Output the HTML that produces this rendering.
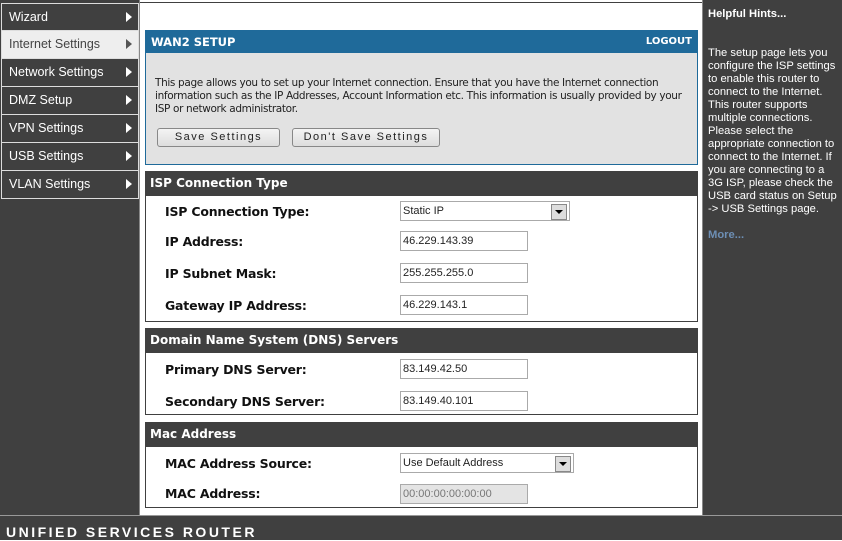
<!DOCTYPE html>
<html><head><style>
*{margin:0;padding:0;box-sizing:border-box}
body{width:842px;height:540px;background:#fff;position:relative;overflow:hidden;font-family:"Liberation Sans",sans-serif}
.a{position:absolute}
.side{left:0;top:0;width:140px;height:515px;background:#404040;border-right:1px solid #888}
.mi{position:absolute;left:1px;width:138px;height:28px;background:#404040;color:#fff;font-size:12.5px;line-height:27px;padding-left:7px;border:1px solid #ddd;border-top:none}
.mi.on{background:#eee;color:#444}
.mi:after{content:"";position:absolute;right:6px;top:8px;border-left:6px solid #fff;border-top:5px solid transparent;border-bottom:5px solid transparent}
.mi.on:after{border-left-color:#555}
.right{left:702px;top:0;width:140px;height:515px;background:#404040;color:#fff;font-family:"Liberation Sans",sans-serif;font-size:11.2px;line-height:13px;padding:8px 3px 0 5px;border-left:1px solid #888}
.hdr{background:#404040;color:#fff;font-weight:bold;font-size:12px;padding-left:5px;font-family:"DejaVu Sans",sans-serif}
.box{border:1px solid #404040;background:#fff}
.lbl{position:absolute;left:19px;font-size:12.5px;font-weight:bold;color:#111;font-family:"DejaVu Sans",sans-serif;letter-spacing:-0.2px}
.in{position:absolute;left:254px;width:128px;height:20px;border:1px solid #aaa;font-size:11px;line-height:18px;padding-left:2px;color:#222;background:#fff}
.sel{width:170px}
.sel:after{content:"";position:absolute;right:2px;top:2px;width:14px;height:14px;background:#ddd;border:1px solid #888}
.sel:before{content:"";position:absolute;right:6px;top:8px;border-top:4px solid #000;border-left:4px solid transparent;border-right:4px solid transparent;z-index:2}
.btn{position:absolute;top:128px;height:19px;border:1px solid #888;border-radius:3px;background:linear-gradient(#f4f4f4,#ddd);font-size:11px;text-align:center;line-height:17px;letter-spacing:1.5px;font-family:"Liberation Sans",sans-serif;color:#222}
</style></head><body>
<div class="a" style="left:0;top:0;width:842px;height:3px;background:#fff;border-bottom:1px solid #404040"></div>
<div class="a side"></div>
<div class="mi" style="top:3px;border-top:1px solid #ddd">Wizard</div>
<div class="mi on" style="top:31px">Internet Settings</div>
<div class="mi" style="top:59px">Network Settings</div>
<div class="mi" style="top:87px">DMZ Setup</div>
<div class="mi" style="top:115px">VPN Settings</div>
<div class="mi" style="top:143px">USB Settings</div>
<div class="mi" style="top:171px">VLAN Settings</div>
<div class="a right"><b>Helpful Hints...</b><br><br><br>The setup page lets you configure the ISP settings to enable this router to connect to the Internet. This router supports multiple connections. Please select the appropriate connection to connect to the Internet. If you are connecting to a 3G ISP, please check the USB card status on Setup -&gt; USB Settings page.<br><br><b style="color:#6d8fb5">More...</b></div>

<div class="a" style="left:145px;top:30px;width:553px;height:135px;border:1px solid #1f6a9a;background:#e2e2e2">
<div style="background:#1f6a9a;color:#fff;height:22px;line-height:22px;font-weight:bold;font-size:11.5px;padding:0 5px;font-family:'DejaVu Sans',sans-serif">WAN2 SETUP<span style="float:right;font-size:10px">LOGOUT</span></div>
<div style="position:absolute;left:9px;top:46px;width:535px;font-size:10.5px;line-height:13px;color:#222;font-family:'DejaVu Sans',sans-serif;letter-spacing:-0.35px">This page allows you to set up your Internet connection. Ensure that you have the Internet connection information such as the IP Addresses, Account Information etc. This information is usually provided by your ISP or network administrator.</div>
</div>
<div class="btn" style="left:157px;width:123px">Save Settings</div>
<div class="btn" style="left:292px;width:148px">Don't Save Settings</div>

<div class="a hdr" style="left:145px;top:171px;width:553px;height:24px;line-height:24px">ISP Connection Type</div>
<div class="a box" style="left:145px;top:195px;width:553px;height:127px">
<div class="lbl" style="top:8px">ISP Connection Type:</div><div class="in sel" style="top:5px">Static IP</div>
<div class="lbl" style="top:38px">IP Address:</div><div class="in" style="top:35px">46.229.143.39</div>
<div class="lbl" style="top:70px">IP Subnet Mask:</div><div class="in" style="top:67px">255.255.255.0</div>
<div class="lbl" style="top:102px">Gateway IP Address:</div><div class="in" style="top:99px">46.229.143.1</div>
</div>
<div class="a hdr" style="left:145px;top:328px;width:553px;height:24px;line-height:24px">Domain Name System (DNS) Servers</div>
<div class="a box" style="left:145px;top:352px;width:553px;height:63px">
<div class="lbl" style="top:9px">Primary DNS Server:</div><div class="in" style="top:6px">83.149.42.50</div>
<div class="lbl" style="top:41px">Secondary DNS Server:</div><div class="in" style="top:38px">83.149.40.101</div>
</div>
<div class="a hdr" style="left:145px;top:422px;width:553px;height:24px;line-height:24px">Mac Address</div>
<div class="a box" style="left:145px;top:446px;width:553px;height:62px">
<div class="lbl" style="top:9px">MAC Address Source:</div><div class="in sel" style="top:6px;width:174px">Use Default Address</div>
<div class="lbl" style="top:39px">MAC Address:</div><div class="in" style="top:37px;background:#e4e4e4;color:#777">00:00:00:00:00:00</div>
</div>
<div class="a" style="left:0;top:515px;width:842px;height:25px;background:#404040;border-top:1px solid #999;color:#fff;font-size:14px;font-weight:bold;letter-spacing:2.5px;padding:7px 0 0 6px;line-height:18px">UNIFIED SERVICES ROUTER</div>
</body></html>
